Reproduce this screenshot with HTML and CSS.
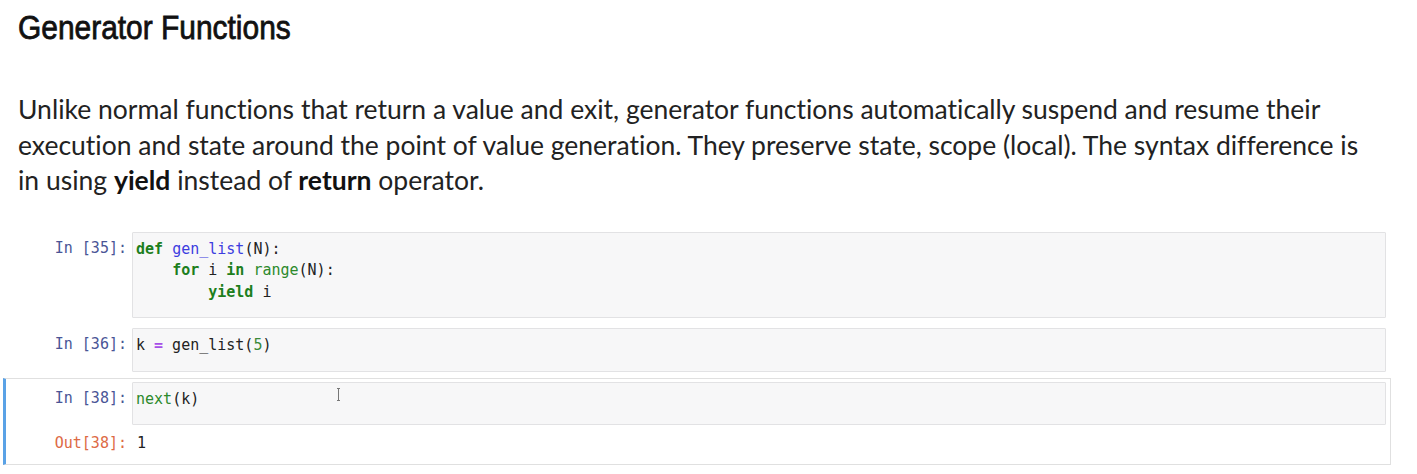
FILE: index.html
```html
<!DOCTYPE html>
<html>
<head>
<meta charset="utf-8">
<link rel="stylesheet" href="styles.css">
</head>
<body>
<div class="page">
  <div class="md">
    <h2 class="title"><span class="title-inner">Generator Functions</span></h2>
    <p class="text">Unlike normal functions that return a value and exit, generator functions automatically suspend and resume their execution and state around the point of value generation. They preserve state, scope (local). The syntax difference is in using <b>yield</b> instead of <b>return</b> operator.</p>
  </div>
  <div class="cells">
    <div class="cell">
      <div class="row">
        <div class="prompt in">In&nbsp;[35]:</div>
        <div class="input tall"><pre><span class="kw">def</span> <span class="fn">gen_list</span>(N):
    <span class="kw">for</span> i <span class="kw">in</span> <span class="bi">range</span>(N):
        <span class="kw">yield</span> i</pre></div>
      </div>
    </div>
    <div class="cell">
      <div class="row">
        <div class="prompt in">In&nbsp;[36]:</div>
        <div class="input"><pre>k <span class="op">=</span> gen_list(<span class="num">5</span>)</pre></div>
      </div>
    </div>
    <div class="cell selected">
      <div class="row">
        <div class="prompt in">In&nbsp;[38]:</div>
        <div class="input"><pre><span class="bi">next</span>(k)</pre><span class="ibeam"></span></div>
      </div>
      <div class="row out-row">
        <div class="prompt out">Out[38]:</div>
        <div class="output"><pre>1</pre></div>
      </div>
    </div>
  </div>
</div>
</body>
</html>
```
FILE: styles.css
```css
html, body {
  margin: 0;
  padding: 0;
  background: #ffffff;
}
.page {
  width: 1417px;
  height: 474px;
  overflow: hidden;
}
.md {
  padding: 0 0 0 18px;
}
.title {
  margin: 0;
  padding-top: 8px;
  font-family: "Liberation Sans", Arial, sans-serif;
  font-weight: normal;
  font-size: 34px;
  line-height: 38px;
  color: #111;
}
.title-inner {
  display: inline-block;
  transform: scaleX(0.88);
  transform-origin: left center;
  -webkit-text-stroke: 0.8px #111;
}
.text {
  margin: 46px 0 0 0;
  font-family: Lato, sans-serif;
  font-size: 26.5px;
  line-height: 35.5px;
  color: #222;
  width: 1365px;
  font-variant-ligatures: none;
}
.text b {
  font-weight: bold;
  color: #111;
}
.cells {
  margin-top: 29px;
  display: flex;
  flex-direction: column;
  gap: 2px;
}
.cell {
  margin-left: 3px;
  width: 1380px;
  border: 1px solid transparent;
  border-left: 3px solid transparent;
  padding: 3px 4px 3px 0;
}
.cell.selected {
  border-color: #e0e0e0;
  border-left-color: #5aa2e6;
  padding-bottom: 9px;
}
.row {
  display: flex;
  align-items: flex-start;
}
.prompt {
  width: 121px;
  flex: none;
  text-align: right;
  padding-right: 5px;
  padding-top: 6px;
  font-family: "DejaVu Sans Mono", monospace;
  font-size: 15px;
  line-height: 21.5px;
}
.prompt.in {
  color: #4a5596;
}
.prompt.out {
  color: #dd6a45;
}
.input {
  position: relative;
  flex: 1;
  background: #f7f7f8;
  border: 1px solid #e2e2e4;
  border-radius: 1px;
  padding: 6px 4px 14px 3px;
  min-height: 21px;
}
.input.tall {
  min-height: 63px;
}
pre {
  margin: 0;
  font-family: "DejaVu Sans Mono", monospace;
  font-size: 15px;
  line-height: 21.5px;
  color: #222;
}
.output {
  flex: 1;
  padding: 6px 5px 0 5px;
}
.out-row {
  margin-top: 2px;
}
.kw {
  color: #1d7f1d;
  font-weight: bold;
}
.fn {
  color: #3d3de0;
}
.bi {
  color: #2c8a2c;
}
.op {
  color: #a74ee8;
  font-weight: bold;
}
.num {
  color: #3a8a3a;
}
.ibeam {
  position: absolute;
  left: 204px;
  top: 5px;
  width: 3px;
  height: 13px;
  border-top: 1px solid #777;
  border-bottom: 1px solid #777;
  box-sizing: border-box;
}
.ibeam::after {
  content: "";
  position: absolute;
  left: 1px;
  top: 0;
  width: 1px;
  height: 11px;
  background: #777;
}
```
